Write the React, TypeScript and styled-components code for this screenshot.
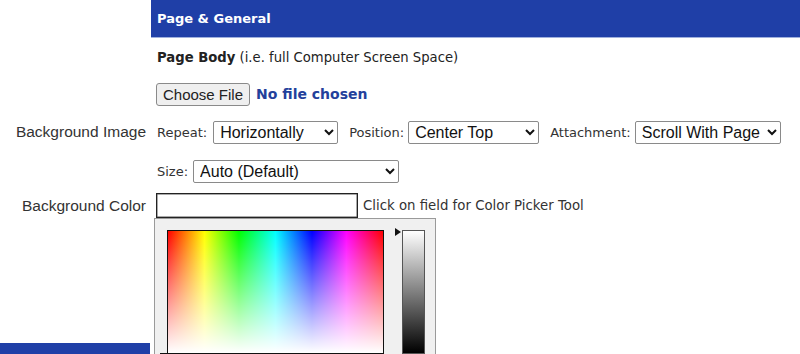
import styled, { createGlobalStyle } from 'styled-components';

const GlobalStyle = createGlobalStyle`
  html, body {
    margin: 0;
    padding: 0;
    background: #fff;
    overflow: hidden;
  }
  body {
    font-family: "DejaVu Sans", Verdana, sans-serif;
    font-size: 13px;
    color: #222;
  }
`;

const BLUE = '#1f3fa7';

const Layout = styled.div`
  display: grid;
  grid-template-columns: 151px 1fr;
  grid-template-rows: 38px 38px 36px 40px 38px 31px 122px 20px;
`;

const LabelCell = styled.div`
  display: flex;
  align-items: center;
  justify-content: flex-end;
  padding-right: 5px;
  font-family: "Liberation Sans", Arial, sans-serif;
  font-size: 15.5px;
  color: #333;
`;

const Cell = styled.div`
  display: flex;
  align-items: center;
  padding-left: 6px;
  position: relative;
`;

const Header = styled.div`
  background: ${BLUE};
  border-bottom: 1px solid #9fb0dd;
  color: #fff;
  font-weight: bold;
  font-size: 13px;
  display: flex;
  align-items: center;
  padding-left: 6px;
  padding-bottom: 1px;
`;

const SideTab = styled.div`
  background: ${BLUE};
  margin-right: 1px;
`;

const Strong = styled.b`
  font-weight: bold;
  color: #222;
`;

const Body = styled.span`
  font-size: 13.2px;
`;

const FileButton = styled.button`
  font-family: "Liberation Sans", Arial, sans-serif;
  font-size: 15px;
  color: #222;
  height: 23px;
  padding: 0 6px;
  margin-left: -1px;
  background: #efefef;
  border: 1px solid #8a8a8a;
  border-radius: 3px;
`;

const NoFile = styled.span`
  font-weight: bold;
  font-size: 14px;
  color: #23409b;
  margin-left: 6px;
`;

const Field = styled.label`
  display: flex;
  align-items: center;
  margin-right: 11px;
  color: #333;
`;

const Select = styled.select<{ $w: number; $gap?: number }>`
  width: ${p => p.$w}px;
  height: 23px;
  margin-left: ${p => p.$gap ?? 6}px;
  font-family: "Liberation Sans", Arial, sans-serif;
  font-size: 16px;
  color: #111;
  background: #fff;
  border: 1px solid #8a8a8a;
  border-radius: 2px;
  padding: 0 2px;
`;

const ColorInput = styled.input`
  width: 202px;
  height: 25px;
  box-sizing: border-box;
  margin-left: -1px;
  border: 1px solid #222;
  box-shadow: inset 0 0 0 0.5px #555;
  background: #fff;
`;

const Hint = styled.span`
  margin-left: 5px;
  font-size: 13.3px;
  color: #333;
`;

const Picker = styled.div`
  position: absolute;
  left: 3px;
  top: 28px;
  width: 282px;
  height: 150px;
  box-sizing: border-box;
  background: #f0f0f0;
  border: 1px solid #9a9a9a;
  z-index: 5;
`;

const Spectrum = styled.div`
  position: absolute;
  left: 12px;
  top: 11px;
  width: 217px;
  height: 124px;
  box-sizing: border-box;
  border: 1px solid #111;
  background:
    linear-gradient(to bottom, rgba(255, 255, 255, 0), #fff),
    linear-gradient(to right, #f00, #ff0 17%, #0f0 33%, #0ff 50%, #00f 67%, #f0f 83%, #f00);
`;

const Cross = styled.div`
  position: absolute;
  left: -8px;
  bottom: -9px;
  width: 16px;
  height: 16px;
  &::before, &::after {
    content: '';
    position: absolute;
    background: #111;
  }
  &::before { left: 7px; top: 0; width: 1px; height: 16px; }
  &::after { top: 7px; left: 0; height: 1px; width: 16px; }
`;

const Slider = styled.div`
  position: absolute;
  left: 247px;
  top: 11px;
  width: 23px;
  height: 124px;
  box-sizing: border-box;
  border: 1px solid #555;
  background: linear-gradient(to bottom, #fff, #000);
`;

const Pointer = styled.div`
  position: absolute;
  left: 240px;
  top: 9px;
  width: 0;
  height: 0;
  border-top: 4px solid transparent;
  border-bottom: 4px solid transparent;
  border-left: 6px solid #111;
`;

export default function App() {
  return (
    <>
      <GlobalStyle />
      <Layout>
        <div />
        <Header>Page &amp; General</Header>

        <div />
        <Cell>
          <Body>
            <Strong>Page Body</Strong> (i.e. full Computer Screen Space)
          </Body>
        </Cell>

        <div />
        <Cell>
          <FileButton type="button">Choose File</FileButton>
          <NoFile>No file chosen</NoFile>
        </Cell>

        <LabelCell>Background Image</LabelCell>
        <Cell>
          <Field>
            Repeat:
            <Select $w={125} defaultValue="h">
              <option value="h">Horizontally</option>
              <option value="v">Vertically</option>
            </Select>
          </Field>
          <Field>
            Position:
            <Select $w={131} $gap={4} defaultValue="ct">
              <option value="ct">Center Top</option>
            </Select>
          </Field>
          <Field>
            Attachment:
            <Select $w={146} $gap={4} defaultValue="s">
              <option value="s">Scroll With Page</option>
            </Select>
          </Field>
        </Cell>

        <div />
        <Cell>
          <Field>
            Size:
            <Select $w={206} $gap={5} defaultValue="a">
              <option value="a">Auto (Default)</option>
            </Select>
          </Field>
        </Cell>

        <LabelCell>Background Color</LabelCell>
        <Cell>
          <ColorInput type="text" />
          <Hint>Click on field for Color Picker Tool</Hint>
          <Picker>
            <Spectrum>
              <Cross />
            </Spectrum>
            <Pointer />
            <Slider />
          </Picker>
        </Cell>

        <div />
        <div />

        <SideTab />
        <div />
      </Layout>
    </>
  );
}
